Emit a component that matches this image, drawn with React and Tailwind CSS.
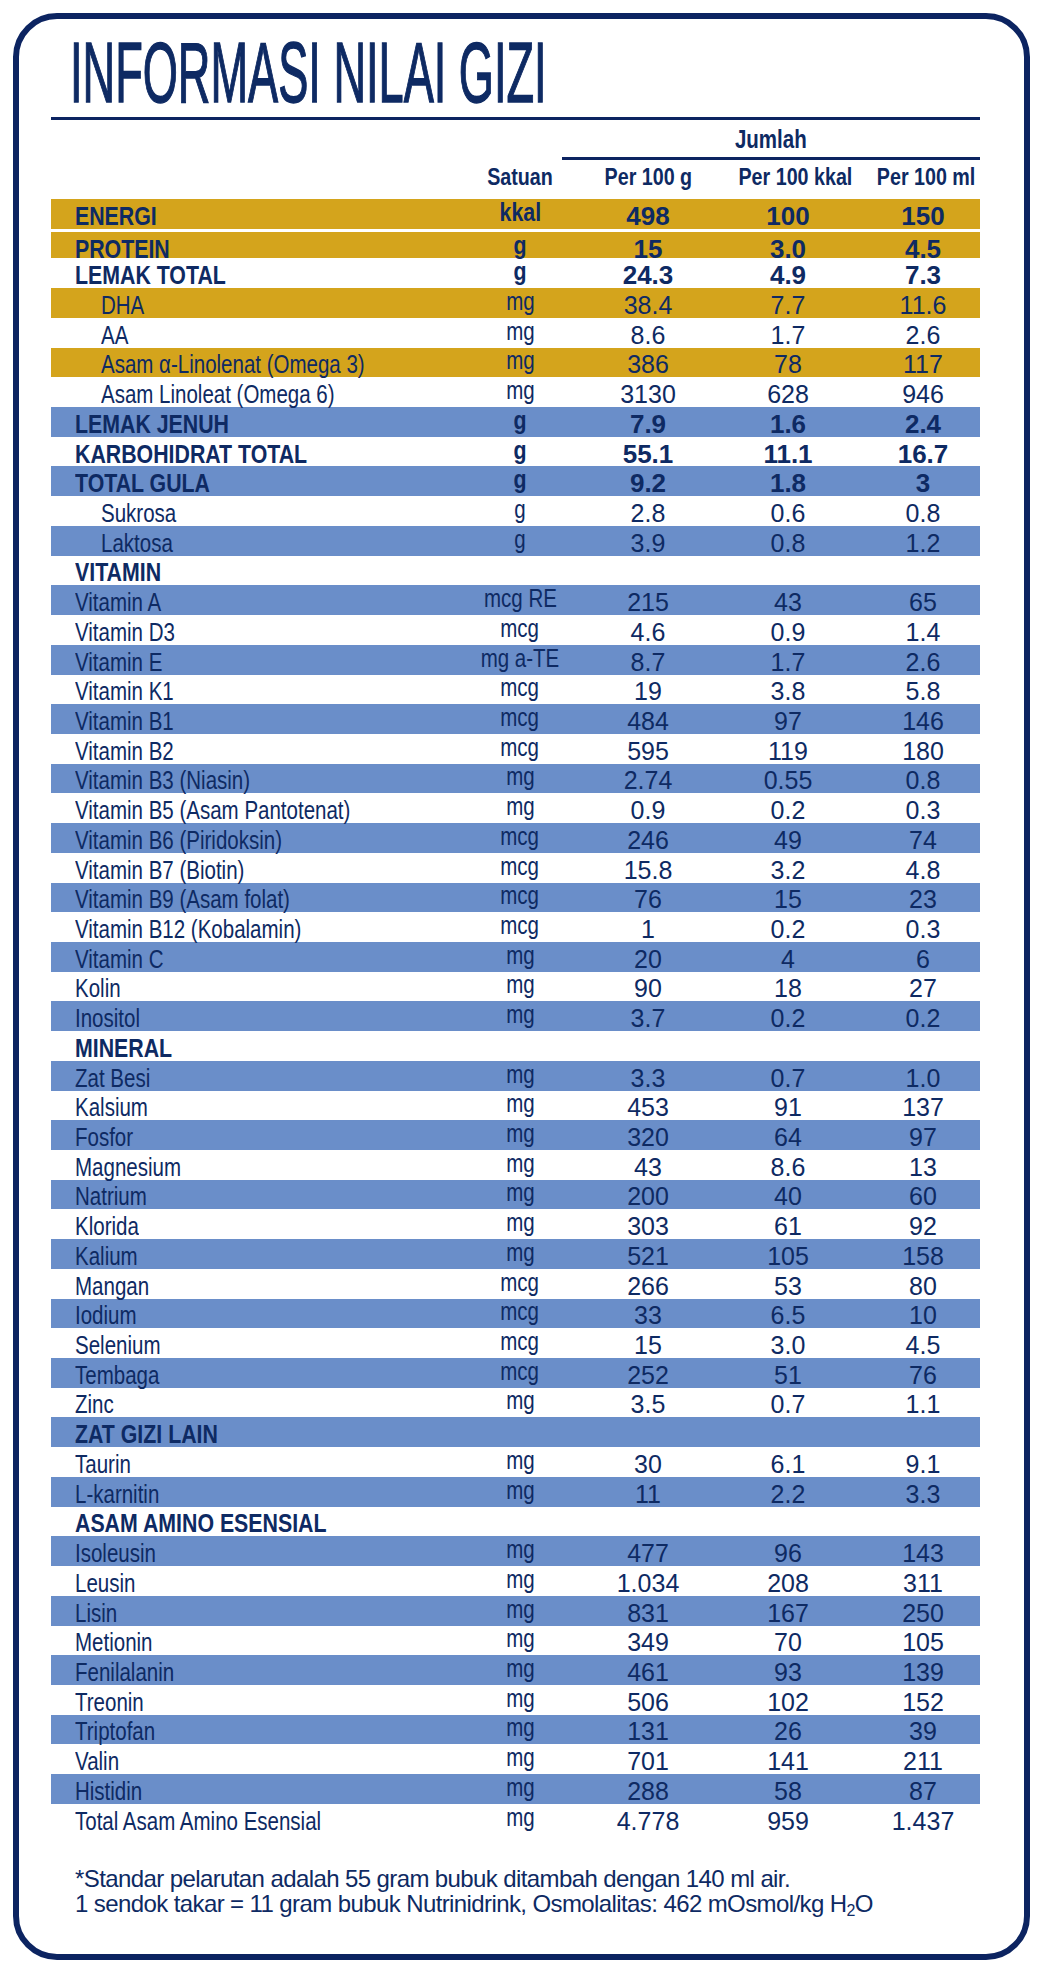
import React from 'react';
import clsx from 'clsx';

const rows = [
  { l: 'ENERGI', u: 'kkal', v: ['498', '100', '150'], bg: 'gold', b: true },
  { l: 'PROTEIN', u: 'g', v: ['15', '3.0', '4.5'], bg: 'gold', b: true, sep: true },
  { l: 'LEMAK TOTAL', u: 'g', v: ['24.3', '4.9', '7.3'], b: true },
  { l: 'DHA', u: 'mg', v: ['38.4', '7.7', '11.6'], bg: 'gold', i: true },
  { l: 'AA', u: 'mg', v: ['8.6', '1.7', '2.6'], i: true },
  { l: 'Asam α-Linolenat (Omega 3)', u: 'mg', v: ['386', '78', '117'], bg: 'gold', i: true },
  { l: 'Asam Linoleat (Omega 6)', u: 'mg', v: ['3130', '628', '946'], i: true },
  { l: 'LEMAK JENUH', u: 'g', v: ['7.9', '1.6', '2.4'], bg: 'blue', b: true },
  { l: 'KARBOHIDRAT TOTAL', u: 'g', v: ['55.1', '11.1', '16.7'], b: true },
  { l: 'TOTAL GULA', u: 'g', v: ['9.2', '1.8', '3'], bg: 'blue', b: true },
  { l: 'Sukrosa', u: 'g', v: ['2.8', '0.6', '0.8'], i: true },
  { l: 'Laktosa', u: 'g', v: ['3.9', '0.8', '1.2'], bg: 'blue', i: true },
  { l: 'VITAMIN', h: true },
  { l: 'Vitamin A', u: 'mcg RE', v: ['215', '43', '65'], bg: 'blue' },
  { l: 'Vitamin D3', u: 'mcg', v: ['4.6', '0.9', '1.4'] },
  { l: 'Vitamin E', u: 'mg a-TE', v: ['8.7', '1.7', '2.6'], bg: 'blue' },
  { l: 'Vitamin K1', u: 'mcg', v: ['19', '3.8', '5.8'] },
  { l: 'Vitamin B1', u: 'mcg', v: ['484', '97', '146'], bg: 'blue' },
  { l: 'Vitamin B2', u: 'mcg', v: ['595', '119', '180'] },
  { l: 'Vitamin B3 (Niasin)', u: 'mg', v: ['2.74', '0.55', '0.8'], bg: 'blue' },
  { l: 'Vitamin B5 (Asam Pantotenat)', u: 'mg', v: ['0.9', '0.2', '0.3'] },
  { l: 'Vitamin B6 (Piridoksin)', u: 'mcg', v: ['246', '49', '74'], bg: 'blue' },
  { l: 'Vitamin B7 (Biotin)', u: 'mcg', v: ['15.8', '3.2', '4.8'] },
  { l: 'Vitamin B9 (Asam folat)', u: 'mcg', v: ['76', '15', '23'], bg: 'blue' },
  { l: 'Vitamin B12 (Kobalamin)', u: 'mcg', v: ['1', '0.2', '0.3'] },
  { l: 'Vitamin C', u: 'mg', v: ['20', '4', '6'], bg: 'blue' },
  { l: 'Kolin', u: 'mg', v: ['90', '18', '27'] },
  { l: 'Inositol', u: 'mg', v: ['3.7', '0.2', '0.2'], bg: 'blue' },
  { l: 'MINERAL', h: true },
  { l: 'Zat Besi', u: 'mg', v: ['3.3', '0.7', '1.0'], bg: 'blue' },
  { l: 'Kalsium', u: 'mg', v: ['453', '91', '137'] },
  { l: 'Fosfor', u: 'mg', v: ['320', '64', '97'], bg: 'blue' },
  { l: 'Magnesium', u: 'mg', v: ['43', '8.6', '13'] },
  { l: 'Natrium', u: 'mg', v: ['200', '40', '60'], bg: 'blue' },
  { l: 'Klorida', u: 'mg', v: ['303', '61', '92'] },
  { l: 'Kalium', u: 'mg', v: ['521', '105', '158'], bg: 'blue' },
  { l: 'Mangan', u: 'mcg', v: ['266', '53', '80'] },
  { l: 'Iodium', u: 'mcg', v: ['33', '6.5', '10'], bg: 'blue' },
  { l: 'Selenium', u: 'mcg', v: ['15', '3.0', '4.5'] },
  { l: 'Tembaga', u: 'mcg', v: ['252', '51', '76'], bg: 'blue' },
  { l: 'Zinc', u: 'mg', v: ['3.5', '0.7', '1.1'] },
  { l: 'ZAT GIZI LAIN', h: true, bg: 'blue' },
  { l: 'Taurin', u: 'mg', v: ['30', '6.1', '9.1'] },
  { l: 'L-karnitin', u: 'mg', v: ['11', '2.2', '3.3'], bg: 'blue' },
  { l: 'ASAM AMINO ESENSIAL', h: true },
  { l: 'Isoleusin', u: 'mg', v: ['477', '96', '143'], bg: 'blue' },
  { l: 'Leusin', u: 'mg', v: ['1.034', '208', '311'] },
  { l: 'Lisin', u: 'mg', v: ['831', '167', '250'], bg: 'blue' },
  { l: 'Metionin', u: 'mg', v: ['349', '70', '105'] },
  { l: 'Fenilalanin', u: 'mg', v: ['461', '93', '139'], bg: 'blue' },
  { l: 'Treonin', u: 'mg', v: ['506', '102', '152'] },
  { l: 'Triptofan', u: 'mg', v: ['131', '26', '39'], bg: 'blue' },
  { l: 'Valin', u: 'mg', v: ['701', '141', '211'] },
  { l: 'Histidin', u: 'mg', v: ['288', '58', '87'], bg: 'blue' },
  { l: 'Total Asam Amino Esensial', u: 'mg', v: ['4.778', '959', '1.437'] },
];

const sans = "font-['Liberation_Sans',Arial,sans-serif]";
const cols = 'grid grid-cols-[419px_100px_156px_124px_130px]';

// condensed look: Liberation Sans squeezed sideways
const Narrow = ({ left, className, children }) => (
  <span
    className={clsx(
      'inline-block whitespace-nowrap scale-x-[0.82]',
      left ? 'origin-left' : 'origin-center',
      className
    )}
  >
    {children}
  </span>
);

const Row = ({ r }) => {
  const bold = r.b || r.h;
  return (
    <div
      className={clsx(
        cols,
        sans,
        'h-[29.72px] items-end leading-none',
        r.bg === 'gold' && 'bg-[#d4a41c]',
        r.bg === 'blue' && 'bg-[#6a8ec9]',
        r.sep && 'border-t-[3px] border-white bg-clip-padding'
      )}
    >
      <div className={clsx(bold ? 'font-bold text-[26px]' : 'text-[25px]', r.i ? 'pl-[50px]' : 'pl-[24px]')}>
        <Narrow left>{r.l}</Narrow>
      </div>
      {r.u && (
        <>
          <div className={clsx('text-center pb-[4px]', r.b ? 'font-bold text-[26px]' : 'text-[25px]')}>
            <Narrow>{r.u}</Narrow>
          </div>
          {r.v.map((v, k) => (
            <div key={k} className={clsx('text-center', r.b ? 'font-bold text-[26px]' : 'text-[25px]', k === 2 && 'pl-[16px]')}>
              {v}
            </div>
          ))}
        </>
      )}
    </div>
  );
};

const App = () => {
  return (
    <div className="w-[1048px] h-[1975px] bg-white p-[13px] text-[#0e2a63]">
      <div className="w-[1017px] h-[1947px] rounded-[44px] border-[6px] border-[#0c2461] pl-[32px] pt-[10px]">
        <div className="w-[929px]">
          <div
            className={clsx(
              sans,
              'ml-[19px] text-[86px] leading-none whitespace-nowrap origin-left scale-x-[0.525] [-webkit-text-stroke:1.4px_#0e2a63]'
            )}
          >
            INFORMASI NILAI GIZI
          </div>
          <div className="mt-[2px] h-[3px] bg-[#0c2461]" />

          <div className="ml-[511px] mt-[7px] pb-[5px] border-b-[3px] border-[#0c2461]">
            <div className={clsx(sans, 'text-center font-bold text-[25px] leading-none')}>
              <Narrow>Jumlah</Narrow>
            </div>
          </div>

          <div className={clsx(cols, sans, 'h-[39px] pt-[5px] font-bold text-[24px] leading-none')}>
            <div />
            <div className="text-center">
              <Narrow>Satuan</Narrow>
            </div>
            <div className="text-center">
              <Narrow>Per 100 g</Narrow>
            </div>
            <div className="text-center">
              <Narrow>Per 100 kkal</Narrow>
            </div>
            <div className="text-center pl-[16px]">
              <Narrow>Per 100 ml</Narrow>
            </div>
          </div>

          <div className="flex flex-col">
            {rows.map((r, idx) => (
              <Row key={idx} r={r} />
            ))}
          </div>

          <div className={clsx(sans, 'mt-[32px] pl-[24px] text-[24px] leading-[25px] tracking-[-0.6px]')}>
            <p>*Standar pelarutan adalah 55 gram bubuk ditambah dengan 140 ml air.</p>
            <p>
              1 sendok takar = 11 gram bubuk Nutrinidrink, Osmolalitas: 462 mOsmol/kg H
              <sub className="text-[16px]">2</sub>O
            </p>
          </div>
        </div>
      </div>
    </div>
  );
};

export default App;
